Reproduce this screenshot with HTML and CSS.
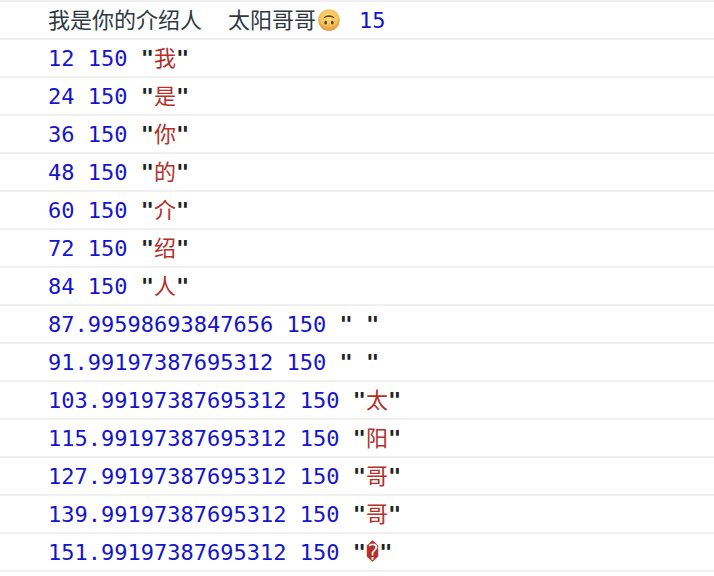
FILE: index.html
```html
<!DOCTYPE html>
<html lang="zh">
<head>
<meta charset="utf-8">
<title>Console</title>
<link rel="stylesheet" href="styles.css">
</head>
<body>
<div class="console">
  <div class="row row-log"><span class="log cjk">我是你的介绍人</span><span class="gap"></span><span class="log cjk">太阳哥哥</span><svg class="emoji" viewBox="0 0 22 22" aria-hidden="true"><defs><radialGradient id="f" cx="50%" cy="35%" r="65%"><stop offset="0" stop-color="#fbdc80"/><stop offset="0.65" stop-color="#f6c057"/><stop offset="1" stop-color="#e0923a"/></radialGradient></defs><circle cx="11" cy="11" r="10.8" fill="url(#f)"/><path d="M5.5 9.5C6.5 5.2 15.5 5.2 16.5 9.5C14.5 7.4 7.5 7.4 5.5 9.5Z" fill="#6b4318"/><ellipse cx="7.7" cy="13.6" rx="1.3" ry="1.9" fill="#5a3a16"/><ellipse cx="14.3" cy="13.6" rx="1.3" ry="1.9" fill="#5a3a16"/></svg><span class="gap-num"></span><span class="num">15</span></div>
  <div class="row"><span class="num">12 150</span> <span class="q">"</span><span class="str">我</span><span class="q">"</span></div>
  <div class="row"><span class="num">24 150</span> <span class="q">"</span><span class="str">是</span><span class="q">"</span></div>
  <div class="row"><span class="num">36 150</span> <span class="q">"</span><span class="str">你</span><span class="q">"</span></div>
  <div class="row"><span class="num">48 150</span> <span class="q">"</span><span class="str">的</span><span class="q">"</span></div>
  <div class="row"><span class="num">60 150</span> <span class="q">"</span><span class="str">介</span><span class="q">"</span></div>
  <div class="row"><span class="num">72 150</span> <span class="q">"</span><span class="str">绍</span><span class="q">"</span></div>
  <div class="row"><span class="num">84 150</span> <span class="q">"</span><span class="str">人</span><span class="q">"</span></div>
  <div class="row"><span class="num">87.99598693847656 150</span> <span class="q">"</span> <span class="q">"</span></div>
  <div class="row"><span class="num">91.99197387695312 150</span> <span class="q">"</span> <span class="q">"</span></div>
  <div class="row"><span class="num">103.99197387695312 150</span> <span class="q">"</span><span class="str">太</span><span class="q">"</span></div>
  <div class="row"><span class="num">115.99197387695312 150</span> <span class="q">"</span><span class="str">阳</span><span class="q">"</span></div>
  <div class="row"><span class="num">127.99197387695312 150</span> <span class="q">"</span><span class="str">哥</span><span class="q">"</span></div>
  <div class="row"><span class="num">139.99197387695312 150</span> <span class="q">"</span><span class="str">哥</span><span class="q">"</span></div>
  <div class="row"><span class="num">151.99197387695312 150</span> <span class="q">"</span><span class="str">�</span><span class="q">"</span></div>
</div>
</body>
</html>
```
FILE: styles.css
```css
html, body {
  margin: 0;
  padding: 0;
  background: #fff;
}
.console {
  border-top: 2px solid #f0f0f0;
  font-family: "DejaVu Sans Mono", "Noto Sans CJK SC", monospace;
  font-size: 22px;
  color: #222;
}
.row {
  height: 36px;
  line-height: 38px;
  padding-left: 48px;
  border-bottom: 2px solid #f0f0f0;
  white-space: pre;
}
.row-log {
  display: flex;
  align-items: baseline;
  line-height: 32px;
}
.log {
  color: #303942;
}
.cjk {
  font-family: "Noto Sans CJK SC", sans-serif;
}
.num {
  color: #1414cc;
}
.str {
  color: #b5302a;
  font-family: "Noto Sans CJK SC", "DejaVu Sans Mono", monospace;
  line-height: 1;
}
.q {
  color: #222;
  font-weight: bold;
}
.gap {
  width: 26px;
}
.gap-num {
  width: 19px;
}
.emoji {
  width: 22px;
  height: 22px;
  flex: none;
  margin-left: 2px;
  align-self: center;
  margin-top: -1px;
}
```
